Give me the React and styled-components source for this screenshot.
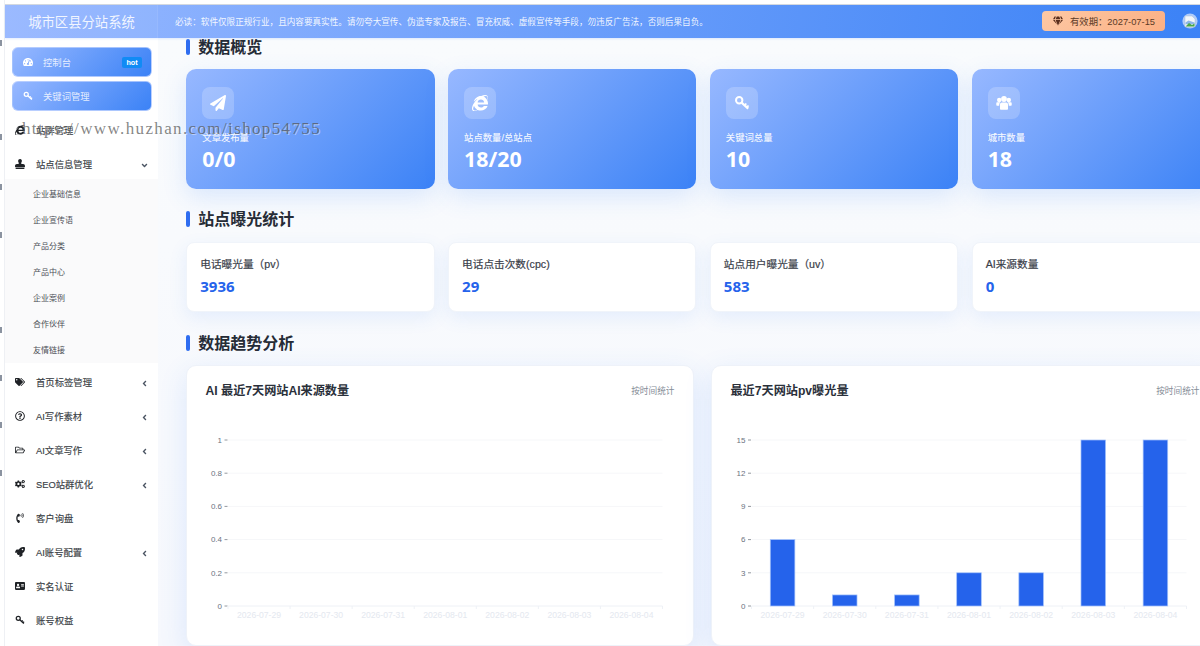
import React from "react";
import styled, { createGlobalStyle } from "styled-components";
import {
  FaTachometerAlt, FaInternetExplorer, FaStamp, FaTags, FaRegQuestionCircle,
  FaRegFolderOpen, FaCogs, FaPhoneVolume, FaRocket, FaAddressCard, FaPaperPlane,
  FaGem, FaAngleDown, FaAngleLeft,
} from "react-icons/fa";

const Global = createGlobalStyle`
  html, body { margin: 0; padding: 0; width: 1200px; height: 646px; overflow: hidden; background: #fff; }
  body { font-family: "Liberation Sans", "Noto Sans CJK SC", sans-serif; }
  * { box-sizing: border-box; }
`;

const GRAD = "linear-gradient(135deg, #97b8ff 0%, #3b82f6 100%)";

const Page = styled.div`
  position: relative; display: flex; width: 1200px; height: 646px; overflow: hidden; background: #fff;
`;
const Strip = styled.div`
  width: 5px; flex: none; display: flex; flex-direction: column; align-items: flex-start; border-right: 1px solid #eef0f4;
`;
const Tick = styled.i`
  display: block; flex: none; width: 2px; height: 6px; background: #8b93a0; margin-top: ${p => p.$gap}px;
`;
const Frame = styled.div`
  flex: 1; min-width: 0; display: flex; flex-direction: column; padding-top: 4.5px;
`;
const Header = styled.header`
  flex: none; height: 33.5px; display: flex; align-items: center; background: linear-gradient(100deg, #97b8ff 0%, #3b82f6 100%);
  box-shadow: 0 -1px 0 #d3d8df, 0 1px 2px rgba(59,130,246,.15); position: relative; z-index: 2;
`;
const Brand = styled.div`
  width: 153px; height: 100%; flex: none; display: flex; align-items: center; justify-content: center; padding-left: 1px;
  color: rgba(255,255,255,.88); font-size: 13.33px; background: rgba(255,255,255,.04); border-right: 1px solid rgba(255,255,255,.08);
`;
const Notice = styled.div`
  flex: 1; padding-left: 17px; color: rgba(255,255,255,.92); font-size: 8.6px; white-space: nowrap;
`;
const Expire = styled.div`
  width: 123px; height: 20px; flex: none; margin-right: 17px; display: flex; align-items: center; gap: 7px; padding-left: 11px;
  border-radius: 4px; background: linear-gradient(135deg, #fdc8a4, #fbb084); color: #5b3a26; font-size: 9.33px;
  svg { font-size: 10px; color: #5a2e1c; }
`;
const Avatar = styled.svg`
  flex: none; width: 16px; height: 17px; margin-right: 2px;
`;
const Body = styled.div`
  flex: 1; min-height: 0; display: flex;
`;
const Sidebar = styled.nav`
  width: 153px; flex: none; background: #fff; padding-top: 7.2px; display: flex; flex-direction: column;
`;
const ActiveItem = styled.div`
  height: 30px; margin: 2.3px 6px 1.7px 7px; padding-left: 10px; display: flex; align-items: center; border-radius: 6px;
  background: ${GRAD}; border: 1px solid rgba(205,220,255,.7); color: rgba(255,255,255,.82); font-size: 9.33px;
  svg { width: 10px; height: 10px; color: #fff; margin-right: 10px; flex: none; }
`;
const Hot = styled.span`
  margin-left: auto; margin-right: 9px; width: 20px; height: 10.5px; border-radius: 2px; background: #118bf5; color: #fff;
  font-size: 7.2px; font-weight: 700; display: flex; align-items: center; justify-content: center;
`;
const Item = styled.div`
  height: 34px; flex: none; padding-left: 10px; display: flex; align-items: center; color: #3b3f46; font-size: 9.33px;
  -webkit-text-stroke: .15px #3b3f46;
  svg.lead { width: 10px; height: 10px; color: #1f2226; margin-right: 11px; flex: none; }
  svg.arrow { width: 9px; height: 9px; color: #4b5563; margin-left: auto; margin-right: 9.5px; margin-top: 3px; flex: none; }
`;
const SubMenu = styled.div`
  flex: none; margin: -2px 0 2px; height: 184px; padding-top: 1.8px; background: #fafafb; display: flex; flex-direction: column;
`;
const SubItem = styled.div`
  height: 25.9px; flex: none; padding-left: 28px; display: flex; align-items: center; color: #4b4f56; font-size: 8px;
`;
const Main = styled.main`
  flex: 1; min-width: 0; padding: 0 0 0 28.3px; overflow: hidden; background: linear-gradient(180deg, #f9fbfd 0%, #f6f8fd 100%);
`;
const Title = styled.h2`
  margin: ${p => p.$top}px 0 ${p => p.$bottom}px; height: 16px; display: flex; align-items: flex-start; gap: 8px;
  font-size: 16px; line-height: 18px; font-weight: 700; color: #262c36;
  &::before { content: ""; width: 4px; height: 16px; border-radius: 2px; background: #2f6df0; flex: none; }
`;
const Grid4 = styled.div`
  display: grid; grid-template-columns: repeat(4, 248.4px); column-gap: 13.4px; width: 1040px;
`;
const BlueCard = styled.div`
  height: 120.5px; border-radius: 10px; padding: 18.5px 16px 0; color: #fff; background: ${GRAD};
  box-shadow: 0 8px 24px rgba(59,130,246,.16);
`;
const IconBox = styled.div`
  width: 32px; height: 32px; border-radius: 8px; background: rgba(255,255,255,.2); display: flex; align-items: center; justify-content: center;
  svg { width: 16px; height: 16px; color: #fff; }
`;
const CardLabel = styled.div`
  margin-top: 13px; height: 12px; line-height: 12px; font-size: 9.33px; color: rgba(255,255,255,.92); -webkit-text-stroke: .15px rgba(255,255,255,.8);
`;
const CardValue = styled.div`
  margin-top: 3px; height: 24px; line-height: 24px; font-family: "Open Sans", sans-serif; font-weight: 700; font-size: 21.33px;
`;
const StatCard = styled.div`
  height: 69.5px; border-radius: 8px; padding: 15px 13px 0; background: #fff; border: 1px solid #f0f4fa;
  box-shadow: 0 6px 18px rgba(59,130,246,.1);
`;
const StatLabel = styled.div`
  height: 13px; line-height: 13px; font-size: 10.67px; color: #3a4049; white-space: nowrap; -webkit-text-stroke: .2px #3a4049;
`;
const StatValue = styled.div`
  margin-top: 5px; height: 20px; line-height: 20px; font-family: "Open Sans", sans-serif; font-size: 15px; font-weight: 700; color: #2563eb;
`;
const Charts = styled.div`
  display: grid; grid-template-columns: 507.5px 507.5px; column-gap: 17.5px; width: 1040px; padding-left: .2px;
`;
const ChartCard = styled.section`
  height: 281px; border-radius: 10px; background: #fff; border: 1px solid #eef2f9; box-shadow: 0 8px 28px rgba(59,130,246,.14); overflow: hidden;
`;
const ChartHead = styled.div`
  height: 49px; padding: 18px 18.5px 0 18px; display: flex; justify-content: space-between; align-items: flex-start;
`;
const ChartTitle = styled.h3`
  margin: 0; height: 14px; line-height: 14px; font-size: 12.15px; font-weight: 700; color: #2a303a;
`;
const ChartNote = styled.span`
  line-height: 14px; font-size: 8.67px; color: #858c97;
`;
const ChartSvg = styled.svg`
  display: block; width: 506px; height: 230px;
  text { font-family: "Liberation Sans", sans-serif; }
`;
const Watermark = styled.div`
  position: absolute; left: 22px; top: 118.5px; z-index: 5; font-family: "Liberation Serif", serif; font-size: 17px; line-height: 20px; letter-spacing: 1.37px;
  color: rgba(85,85,85,.72); text-shadow: 1px 1px 0 rgba(255,255,255,.45); white-space: nowrap; pointer-events: none;
`;

const dates = ["2026-07-29", "2026-07-30", "2026-07-31", "2026-08-01", "2026-08-02", "2026-08-03", "2026-08-04"];

function UsersIcon() {
  return (
    <svg viewBox="0 0 16 16" fill="currentColor" aria-hidden="true">
      <circle cx="3.2" cy="5" r="2.2" />
      <circle cx="12.8" cy="5" r="2.2" />
      <circle cx="8" cy="4" r="2.9" />
      <path d="M.3 8.3c0-.6.5-1 1-1h2.2c.3 0 .6.1.8.3-.7.6-1.1 1.5-1.1 2.5v.7H1.3c-.6 0-1-.4-1-1zM15.7 8.3c0-.6-.5-1-1-1h-2.2c-.3 0-.6.1-.8.3.7.6 1.1 1.5 1.1 2.5v.7h1.9c.6 0 1-.4 1-1z" />
      <path d="M5.9 7.4h4.200c1.100 0 1.900.9 1.900 2v4.300c0 .7-.5 1.100-1.100 1.100H5.100c-.6 0-1.100-.4-1.100-1.100V9.400c0-1.100.8-2 1.900-2z" />
    </svg>
  );
}

function KeyIcon({ className }) {
  return (
    <svg className={className} viewBox="0 0 16 16" fill="none" stroke="currentColor" aria-hidden="true">
      <circle cx="5.2" cy="5.2" r="3.2" strokeWidth="2" />
      <path d="M7.6 7.6l6.6 6" strokeWidth="2.2" />
      <path d="M10.6 10.4l1.7-1.9M12.8 12.400l1.700-1.900" strokeWidth="1.800" />
    </svg>
  );
}

function Chart({ left, right, ticks, max, data }) {
  const top = 25, bottom = 191;
  const y = v => bottom - ((bottom - top) * v) / max;
  const band = (right - left) / 7;
  return (
    <ChartSvg viewBox="0 0 506 230">
      {ticks.map(t => (
        <g key={t}>
          <line x1={left} x2={right} y1={y(t)} y2={y(t)} stroke={t === 0 ? "#eef1f6" : "#f6f7f9"} strokeWidth="1" />
          <line x1={left - 3.5} x2={left - 0.5} y1={y(t)} y2={y(t)} stroke="#777d87" strokeWidth=".8" />
          <text x={left - 6} y={y(t) + 2.8} fontSize="8" fill="#6b7280" textAnchor="end">{t}</text>
        </g>
      ))}
      {dates.map((d, i) => (
        <g key={d}>
          <line x1={left + band * (i + 1)} x2={left + band * (i + 1)} y1={bottom} y2={bottom + 3} stroke="#eef1f6" />
          <text x={left + band * (i + 0.5)} y={bottom + 11.5} fontSize="8.6" fill="#e4e8ef" textAnchor="middle">{d}</text>
        </g>
      ))}
      <line x1={left} x2={left} y1={bottom} y2={bottom + 3} stroke="#eef1f6" />
      {data && data.map((v, i) => (
        <rect key={i} x={left + band * (i + 0.5) - 12.3} y={y(v)} width="24.6" height={bottom - y(v)} fill="#2563eb" stroke="#a5c3fb" strokeWidth=".7" />
      ))}
    </ChartSvg>
  );
}

const menuTop = [
  { icon: FaTags, label: "首页标签管理", arrow: true },
  { icon: FaRegQuestionCircle, label: "AI写作素材", arrow: true },
  { icon: FaRegFolderOpen, label: "AI文章写作", arrow: true },
  { icon: FaCogs, label: "SEO站群优化", arrow: true },
  { icon: FaPhoneVolume, label: "客户询盘" },
  { icon: FaRocket, label: "AI账号配置", arrow: true },
  { icon: FaAddressCard, label: "实名认证" },
  { icon: KeyIcon, label: "账号权益" },
];
const subs = ["企业基础信息", "企业宣传语", "产品分类", "产品中心", "企业案例", "合作伙伴", "友情链接"];
const overview = [
  { icon: FaPaperPlane, label: "文章发布量", value: "0/0" },
  { icon: FaInternetExplorer, label: "站点数量/总站点", value: "18/20" },
  { icon: KeyIcon, label: "关键词总量", value: "10" },
  { icon: UsersIcon, label: "城市数量", value: "18" },
];
const stats = [
  { label: "电话曝光量（pv）", value: "3936" },
  { label: "电话点击次数(cpc)", value: "29" },
  { label: "站点用户曝光量（uv）", value: "583" },
  { label: "AI来源数量", value: "0" },
];
const tickGaps = [40, 88, 44, 42, 89, 42, 41, 42];

export default function App() {
  return (
    <Page>
      <Global />
      <Strip>{tickGaps.map((g, i) => <Tick key={i} $gap={g} />)}</Strip>
      <Frame>
        <Header>
          <Brand>城市区县分站系统</Brand>
          <Notice>必读：软件仅限正规行业，且内容要真实性。请勿夸大宣传、伪造专家及报告、冒充权威、虚假宣传等手段，勿违反广告法，否则后果自负。</Notice>
          <Expire><FaGem />有效期：2027-07-15</Expire>
          <Avatar viewBox="0 0 16 17" aria-hidden="true">
            <circle cx="8" cy="8" r="7.6" fill="#d7e4fb" opacity=".75" />
            <path d="M3 3h7l3 3v8H3z" fill="#f4f7fb" stroke="#aebcd0" strokeWidth=".5" />
            <path d="M3.500 9.500l3-2 6 2v1.800h-9z" fill="#8fb7e8" />
            <path d="M3.500 13.500l3.500-3.500 3 2 2.500-1.500v3z" fill="#4aa84a" />
          </Avatar>
        </Header>
        <Body>
          <Sidebar>
            <ActiveItem><FaTachometerAlt />控制台<Hot>hot</Hot></ActiveItem>
            <ActiveItem><KeyIcon />关键词管理</ActiveItem>
            <Item><FaInternetExplorer className="lead" />站群管理</Item>
            <Item><FaStamp className="lead" />站点信息管理<FaAngleDown className="arrow" /></Item>
            <SubMenu>{subs.map(s => <SubItem key={s}>{s}</SubItem>)}</SubMenu>
            {menuTop.map(({ icon: I, label, arrow }) => (
              <Item key={label}><I className="lead" />{label}{arrow && <FaAngleLeft className="arrow" />}</Item>
            ))}
          </Sidebar>
          <Main>
            <Title $top={1} $bottom={13.5}>数据概览</Title>
            <Grid4>
              {overview.map(({ icon: I, label, value }) => (
                <BlueCard key={label}>
                  <IconBox><I /></IconBox>
                  <CardLabel>{label}</CardLabel>
                  <CardValue>{value}</CardValue>
                </BlueCard>
              ))}
            </Grid4>
            <Title $top={22} $bottom={15}>站点曝光统计</Title>
            <Grid4>
              {stats.map(s => (
                <StatCard key={s.label}>
                  <StatLabel>{s.label}</StatLabel>
                  <StatValue>{s.value}</StatValue>
                </StatCard>
              ))}
            </Grid4>
            <Title $top={23.5} $bottom={14}>数据趋势分析</Title>
            <Charts>
              <ChartCard>
                <ChartHead><ChartTitle>AI 最近7天网站AI来源数量</ChartTitle><ChartNote>按时间统计</ChartNote></ChartHead>
                <Chart left={41} right={475.5} ticks={[0, 0.2, 0.4, 0.6, 0.8, 1]} max={1} />
              </ChartCard>
              <ChartCard>
                <ChartHead><ChartTitle>最近7天网站pv曝光量</ChartTitle><ChartNote>按时间统计</ChartNote></ChartHead>
                <Chart left={39.5} right={474.5} ticks={[0, 3, 6, 9, 12, 15]} max={15} data={[6, 1, 1, 3, 3, 15, 15]} />
              </ChartCard>
            </Charts>
          </Main>
        </Body>
      </Frame>
      <Watermark>https://www.huzhan.com/ishop54755</Watermark>
    </Page>
  );
}
